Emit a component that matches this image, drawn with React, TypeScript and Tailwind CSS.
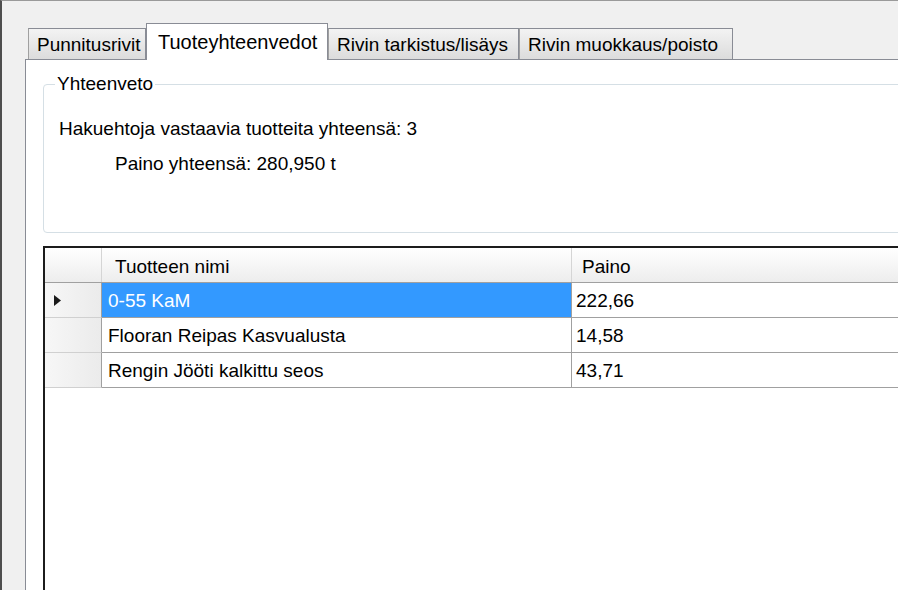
import React from 'react';

type Row = { name: string; weight: string };

const rows: Row[] = [
  { name: '0-55 KaM', weight: '222,66' },
  { name: 'Flooran Reipas Kasvualusta', weight: '14,58' },
  { name: 'Rengin Jööti kalkittu seos', weight: '43,71' },
];

const tabs = [
  { label: 'Punnitusrivit', width: 'w-[118px]' },
  { label: 'Tuoteyhteenvedot', width: 'w-[182px]', active: true },
  { label: 'Rivin tarkistus/lisäys', width: 'w-[191px]' },
  { label: 'Rivin muokkaus/poisto', width: 'w-[214px]' },
];

// Little black arrow in the current row header
const RowArrow = () => (
  <svg width="7" height="11" viewBox="0 0 7 11" className="ml-[9px]">
    <path d="M0 0 L7 5.5 L0 11 Z" fill="#1a1a1a" />
  </svg>
);

export default function App() {
  return (
    <div
      className="w-[898px] h-[590px] overflow-hidden bg-[#f0f0f0] border-t border-t-[#9a9a9a] border-l-2 border-l-[#4e4e4e] text-[19px] text-black"
      style={{ fontFamily: '"Liberation Sans", Arial, sans-serif' }}
    >
      <div className="ml-[23px] pt-[23px] flex flex-col h-full">
        {/* Tab headers */}
        <div className="flex items-end h-[36px] pl-[3px] -mb-px">
          {tabs.map((t) =>
            t.active ? (
              <div
                key={t.label}
                className={`${t.width} h-[37px] relative z-10 bg-white border border-b-0 border-[#898c95] pl-[11px] pt-[7px] leading-[22px] text-[20px] whitespace-nowrap`}
              >
                {t.label}
              </div>
            ) : (
              <div
                key={t.label}
                className={`${t.width} h-[32px] bg-gradient-to-b from-[#f3f3f3] to-[#dcdcdc] border border-[#898c95] border-l-[#a0a0a0] pl-[8px] pt-[5px] leading-[22px] whitespace-nowrap`}
              >
                {t.label}
              </div>
            )
          )}
        </div>

        {/* Tab page */}
        <div className="flex-1 bg-white border-t border-l border-[#898c95] pl-[17px] pt-[13px]">
          <fieldset className="w-[880px] h-[160px] border border-[#d5dfe5] rounded-[4px] pl-[15px]">
            <legend className="ml-[-4px] px-[2px] leading-[22px]">Yhteenveto</legend>
            <div className="mt-[23px] leading-[22px]">Hakuehtoja vastaavia tuotteita yhteensä: 3</div>
            <div className="mt-[13px] ml-[56px] leading-[22px]">Paino yhteensä: 280,950 t</div>
          </fieldset>

          {/* Data grid */}
          <div className="mt-[13px] w-[880px] h-[400px] border-2 border-[#1c1c1c] bg-white">
            <div className="flex h-[35px] border-b border-[#a0a0a0] bg-gradient-to-b from-[#ffffff] to-[#ededed]">
              <div className="w-[57px] shrink-0 border-r border-[#d5d5d5]" />
              <div className="w-[470px] shrink-0 border-r border-[#d5d5d5] pl-[13px] pt-[4px] flex items-center">
                Tuotteen nimi
              </div>
              <div className="flex-1 pl-[10px] pt-[4px] flex items-center">Paino</div>
            </div>
            {rows.map((r, i) => (
              <div key={r.name} className="flex h-[35px]">
                <div className="w-[57px] shrink-0 border-r border-[#a0a0a0] border-b border-b-[#d0d0d0] bg-gradient-to-r from-[#f7f7f7] to-[#ebebeb] flex items-center">
                  {i === 0 && <RowArrow />}
                </div>
                <div
                  className={`w-[470px] shrink-0 border-r border-b border-[#a0a0a0] pl-[6px] pt-[3px] flex items-center ${
                    i === 0 ? 'bg-[#3399ff] text-white' : ''
                  }`}
                >
                  {r.name}
                </div>
                <div className="flex-1 border-b border-[#a0a0a0] pl-[4px] pt-[3px] flex items-center">{r.weight}</div>
              </div>
            ))}
          </div>
        </div>
      </div>
    </div>
  );
}
